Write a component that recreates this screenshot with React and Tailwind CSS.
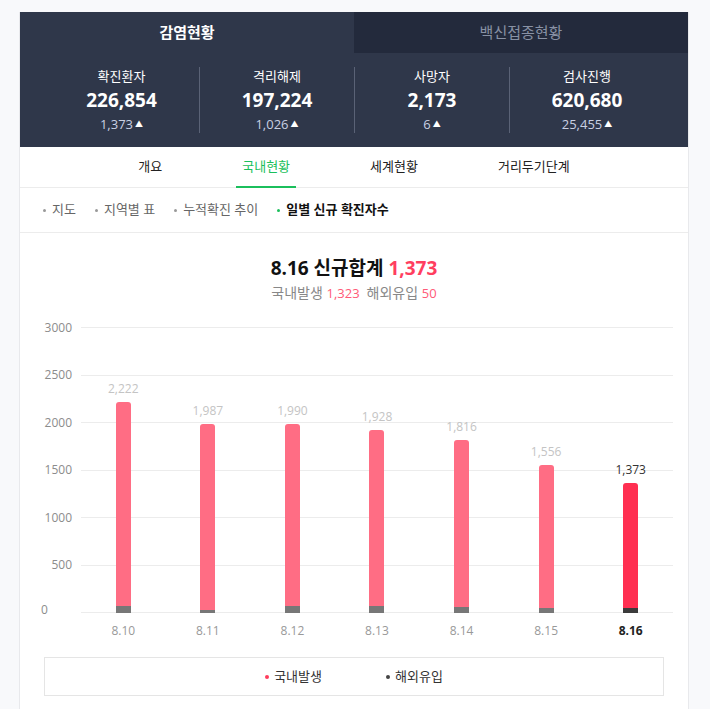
import { useState } from 'react';

const font = { fontFamily: '"Open Sans", "Noto Sans CJK KR", sans-serif' };

const stats = [
  { label: '확진환자', value: '226,854', delta: '1,373' },
  { label: '격리해제', value: '197,224', delta: '1,026' },
  { label: '사망자', value: '2,173', delta: '6' },
  { label: '검사진행', value: '620,680', delta: '25,455' },
];

const tabs = ['개요', '국내현황', '세계현황', '거리두기단계'];
const subTabs = ['지도', '지역별 표', '누적확진 추이', '일별 신규 확진자수'];

// total / overseas per day
const daily = [
  { date: '8.10', total: 2222, overseas: 72 },
  { date: '8.11', total: 1987, overseas: 32 },
  { date: '8.12', total: 1990, overseas: 70 },
  { date: '8.13', total: 1928, overseas: 71 },
  { date: '8.14', total: 1816, overseas: 59 },
  { date: '8.15', total: 1556, overseas: 56 },
  { date: '8.16', total: 1373, overseas: 50 },
];

const yTicks = ['3000', '2500', '2000', '1500', '1000', '500', '0'];
const PX_PER_CASE = 285 / 3000;

const App = () => {
  const [activeTab, setActiveTab] = useState(1);
  const [activeSub, setActiveSub] = useState(3);

  return (
    <div className="min-h-[709px] bg-[#f8f9fb] pt-3" style={font}>
      <div className="ml-[19px] w-[670px] bg-white border-x border-[#e8e9ec]">
        {/* top tabs */}
        <div className="grid grid-cols-2 h-[41px]">
          <div className="flex items-center justify-center bg-[#2f374a] text-white text-[15px] font-bold">
            감염현황
          </div>
          <div className="flex items-center justify-center bg-[#232a3c] text-[#8891a4] text-[15px]">
            백신접종현황
          </div>
        </div>

        {/* stats */}
        <div className="bg-[#2f374a] px-6 py-[14px] grid grid-cols-4">
          {stats.map((s, i) => (
            <div
              key={s.label}
              className={`flex flex-col items-center ${i > 0 ? 'border-l border-[#5a6276]' : ''}`}
            >
              <div className="text-[13px] leading-[18px] text-white">{s.label}</div>
              <div className="mt-[2px] text-[19px] leading-[26px] font-bold text-white">{s.value}</div>
              <div className="mt-[2px] flex items-center text-[13px] leading-[18px] text-[#c9d0e3]">
                {s.delta}
                <span className="ml-[2px] text-[8px] text-white">▲</span>
              </div>
            </div>
          ))}
        </div>

        {/* main nav */}
        <div className="flex justify-center gap-[68px] h-[41px] border-b border-[#ececec]">
          {tabs.map((t, i) => (
            <button
              key={t}
              onClick={() => setActiveTab(i)}
              className={`px-[6px] text-[13px] border-b-2 -mb-px ${
                activeTab === i ? 'text-[#1bbf5c] border-[#1bbf5c]' : 'text-[#222] border-transparent'
              }`}
            >
              {t}
            </button>
          ))}
        </div>

        {/* sub nav */}
        <div className="flex items-center gap-[19px] h-[45px] pl-[23px] border-b border-[#ececec]">
          {subTabs.map((t, i) => (
            <button
              key={t}
              onClick={() => setActiveSub(i)}
              className={`flex items-center text-[13px] ${
                activeSub === i ? 'text-[#111] font-bold' : 'text-[#666]'
              }`}
            >
              <span
                className={`w-[3px] h-[3px] rounded-full mr-[6px] ${
                  activeSub === i ? 'bg-[#1bbf5c]' : 'bg-[#999]'
                }`}
              />
              {t}
            </button>
          ))}
        </div>

        {/* chart section */}
        <div className="pt-[22px] pb-6">
          <div className="text-center text-[19px] leading-[26px] font-bold text-[#111]">
            8.16 신규합계 <span className="text-[#ff3e5f]">1,373</span>
          </div>
          <div className="mt-[3px] text-center text-[14px] leading-[18px] text-[#888]">
            국내발생 <span className="text-[13px] text-[#ff5a78]">1,323</span>
            <span className="ml-[7px]">해외유입</span> <span className="text-[13px] text-[#ff5a78]">50</span>
          </div>

          <div className="mt-[25px] flex pr-[15px]">
            <div className="w-[61px] h-[286px] flex flex-col justify-between pr-[9px] text-[12px] text-[#8c8c8c]">
              {yTicks.map((y) => (
                <div
                  key={y}
                  className={`h-px flex items-center ${y === '0' ? 'justify-start pl-[21px] -translate-y-[3px]' : 'justify-end'}`}
                >
                  {y}
                </div>
              ))}
            </div>
            <div className="relative flex-1 h-[286px]">
              <div className="absolute inset-0 flex flex-col justify-between">
                {yTicks.map((y) => (
                  <div key={y} className="h-px bg-[#ececec]" />
                ))}
              </div>
              <div className="absolute inset-0 grid grid-cols-7">
                {daily.map((d, i) => {
                  const last = i === daily.length - 1;
                  return (
                    <div key={d.date} className="flex flex-col items-center justify-end">
                      <div className={`mb-[6px] text-[12px] leading-[14px] ${last ? 'text-[#333]' : 'text-[#c4c4c4]'}`}>
                        {d.total.toLocaleString()}
                      </div>
                      <div
                        className={`w-[15px] rounded-t-[3px] flex flex-col justify-end overflow-hidden ${
                          last ? 'bg-[#ff2f51]' : 'bg-[#ff6d84]'
                        }`}
                        style={{ height: d.total * PX_PER_CASE }}
                      >
                        <div
                          className={last ? 'bg-[#3b3b3b]' : 'bg-[#777]'}
                          style={{ height: d.overseas * PX_PER_CASE }}
                        />
                      </div>
                    </div>
                  );
                })}
              </div>
            </div>
          </div>

          <div className="ml-[61px] mr-[15px] mt-[10px] grid grid-cols-7 text-[12px] leading-[16px]">
            {daily.map((d, i) => (
              <div
                key={d.date}
                className={`text-center ${i === daily.length - 1 ? 'text-[#222] font-bold' : 'text-[#999]'}`}
              >
                {d.date}
              </div>
            ))}
          </div>

          <div className="mx-6 mt-[18px] h-[39px] border border-[#e5e5e5] flex items-center justify-center gap-[64px] text-[13px] text-[#333]">
            <div className="flex items-center">
              <span className="w-1 h-1 rounded-full bg-[#ff3b5c] mr-[5px]" />
              국내발생
            </div>
            <div className="flex items-center">
              <span className="w-1 h-1 rounded-full bg-[#444] mr-[5px]" />
              해외유입
            </div>
          </div>
        </div>
      </div>
    </div>
  );
};

export default App;
